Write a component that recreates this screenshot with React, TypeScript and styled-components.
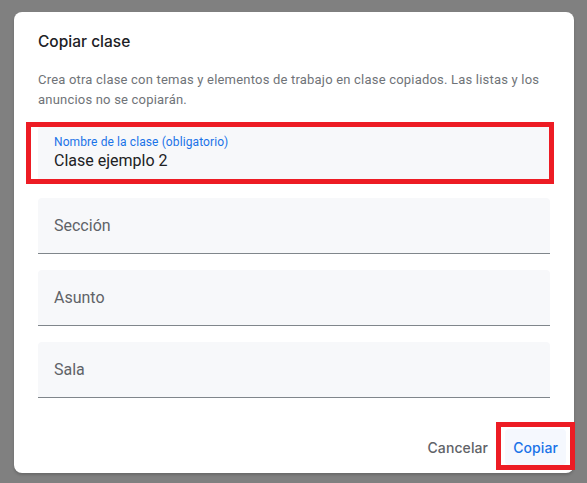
import React from "react";
import styled, { createGlobalStyle, css } from "styled-components";

const Global = createGlobalStyle`
  html, body { margin: 0; padding: 0; background: #808080; }
  body { font-family: Roboto, "Liberation Sans", Arial, sans-serif; }
  * { box-sizing: border-box; }
`;

const Page = styled.div`
  width: 587px;
  height: 483px;
  padding: 12px 0 0 14px;
  background: #808080;
  overflow: hidden;
`;

const Dialog = styled.div`
  width: 560px;
  height: 461px;
  background: #ffffff;
  border-radius: 8px;
  box-shadow: 0 2px 3px rgba(0, 0, 0, 0.18);
  display: flex;
  flex-direction: column;
  padding: 20px 0 8px 24px;
`;

const Title = styled.h2`
  margin: 0;
  font-family: Inter, Roboto, sans-serif;
  font-size: 15.5px;
  line-height: 20px;
  font-weight: 500;
  color: #202124;
`;

const Description = styled.p`
  margin: 18px 24px 0 0;
  font-size: 13px;
  line-height: 20px;
  letter-spacing: 0.2px;
  color: #6f7378;
`;

const Fields = styled.div`
  display: flex;
  flex-direction: column;
  gap: 16px;
  margin: 16px 24px 0 0;
`;

const Highlight = css<{ $offsets: string }>`
  position: relative;
  &::after {
    content: "";
    position: absolute;
    inset: ${(p) => p.$offsets};
    border: 5px solid #ed1c24;
    pointer-events: none;
  }
`;

const Field = styled.div<{ $active?: boolean; $highlight?: boolean; $offsets: string }>`
  height: 56px;
  background: #f7f8fa;
  border-radius: 4px 4px 0 0;
  border-bottom: ${(p) => (p.$active ? "2px solid #1a73e8" : "1px solid #80868b")};
  padding: 0 16px;
  display: flex;
  flex-direction: column;
  justify-content: ${(p) => (p.$active ? "flex-start" : "center")};
  padding-top: ${(p) => (p.$active ? "8px" : "0")};
  ${(p) => p.$highlight && Highlight}
`;

const Label = styled.span`
  font-size: 12px;
  line-height: 16px;
  color: #1a73e8;
  letter-spacing: 0.1px;
`;

const Value = styled.span`
  font-size: 16px;
  line-height: 20px;
  color: #202124;
  margin-top: 1px;
`;

const Placeholder = styled.span`
  font-size: 16px;
  line-height: 20px;
  color: #5f6368;
  margin-top: 1px;
`;

const Actions = styled.div`
  margin-top: auto;
  display: flex;
  justify-content: flex-end;
  gap: 9px;
  padding-right: 8px;
`;

const Button = styled.button<{ $primary?: boolean; $highlight?: boolean; $offsets: string }>`
  height: 36px;
  padding: 0 8px;
  border: none;
  border-radius: 4px;
  background: ${(p) => (p.$primary ? "#f5f8fe" : "transparent")};
  color: ${(p) => (p.$primary ? "#1a73e8" : "#5f6368")};
  font-family: Inter, Roboto, sans-serif;
  font-size: 14px;
  font-weight: 500;
  letter-spacing: 0.1px;
  cursor: pointer;
  ${(p) => p.$highlight && Highlight}
`;

export default function App() {
  return (
    <>
      <Global />
      <Page>
        <Dialog>
          <Title>Copiar clase</Title>
          <Description>
            Crea otra clase con temas y elementos de trabajo en clase copiados. Las listas y los anuncios no se copiarán.
          </Description>
          <Fields>
            <Field $active $highlight $offsets="-4px -4px -4px -12px">
              <Label>Nombre de la clase (obligatorio)</Label>
              <Value>Clase ejemplo 2</Value>
            </Field>
            <Field $offsets="0">
              <Placeholder>Sección</Placeholder>
            </Field>
            <Field $offsets="0">
              <Placeholder>Asunto</Placeholder>
            </Field>
            <Field $offsets="0">
              <Placeholder>Sala</Placeholder>
            </Field>
          </Fields>
          <Actions>
            <Button $offsets="0">Cancelar</Button>
            <Button $primary $highlight $offsets="-7px -9px -5px -9px">
              Copiar
            </Button>
          </Actions>
        </Dialog>
      </Page>
    </>
  );
}
